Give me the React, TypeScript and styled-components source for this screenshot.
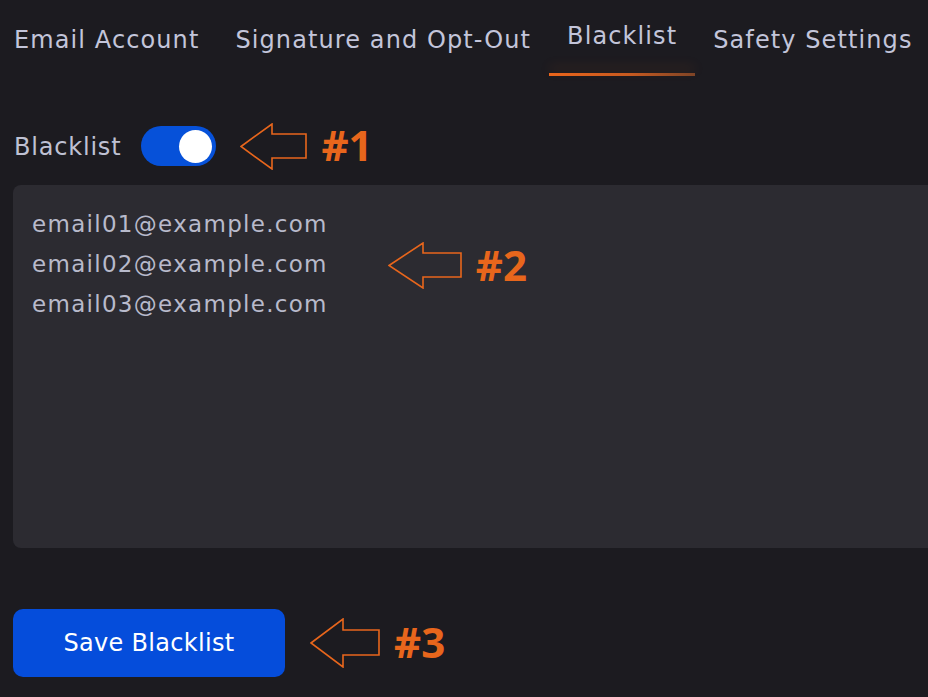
import { useState } from 'react';

import styled, { createGlobalStyle } from 'styled-components';

const tabs = ['Email Account', 'Signature and Opt-Out', 'Blacklist', 'Safety Settings'];

const emails = ['email01@example.com', 'email02@example.com', 'email03@example.com'];

// hand-drawn callout arrows are not all the same size in the screenshot
const Callout = ({ label, w = 66, h = 45 }: { label: string; w?: number; h?: number }) => {
  const head = Math.round(w * 0.48);
  const mid = h / 2;
  const top = Math.round(h * 0.25);
  const bot = h - top;
  return (
    <CalloutWrap>
      <svg width={w + 2} height={h + 2} viewBox={`0 0 ${w + 2} ${h + 2}`}>
        <polygon
          points={`1,${mid + 1} ${head},1 ${head},${top} ${w},${top} ${w},${bot + 1} ${head},${bot + 1} ${head},${h + 1}`}
          fill="none"
          stroke="#e8661c"
          strokeWidth="1.6"
        />
      </svg>
      <span className="label">{label}</span>
    </CalloutWrap>
  );
};

const App = () => {
  const [active, setActive] = useState(2);
  const [enabled, setEnabled] = useState(true);

  return (
    <Page>
      <GlobalStyle />
      <TabBar>
        {tabs.map((t, i) => (
          <Tab key={t} $active={i === active} onClick={() => setActive(i)}>
            {t}
          </Tab>
        ))}
      </TabBar>

      <ToggleRow>
        <span className="title">Blacklist</span>
        <Switch $on={enabled} onClick={() => setEnabled(!enabled)}>
          <span className="knob" />
        </Switch>
        <Callout label="#1" />
      </ToggleRow>

      <ListBox>
        <div className="lines">
          {emails.map((e) => (
            <div key={e}>{e}</div>
          ))}
        </div>
        <Callout label="#2" w={73} />
      </ListBox>

      <Footer>
        <SaveButton>Save Blacklist</SaveButton>
        <Callout label="#3" w={69} h={48} />
      </Footer>
    </Page>
  );
};

export default App;

const GlobalStyle = createGlobalStyle`
  html, body {
    margin: 0;
    padding: 0;
    background: #1c1b20;
  }
  body {
    font-family: 'DejaVu Sans', 'Liberation Sans', sans-serif;
  }
`;

const Page = styled.div`
  width: 928px;
  height: 697px;
  overflow: hidden;
  background: #1c1b20;
  padding-left: 13px;
  box-sizing: border-box;
`;

const TabBar = styled.div`
  display: flex;
  margin-left: -17px;
  height: 77px;
`;

const Tab = styled.div<{ $active: boolean }>`
  position: relative;
  padding: ${(p) => (p.$active ? '22px' : '26px')} 18px 0;
  font-size: 24px;
  line-height: 28px;
  letter-spacing: 1.1px;
  color: #c3c5da;
  white-space: nowrap;
  cursor: pointer;
  &::after {
    content: '';
    display: ${(p) => (p.$active ? 'block' : 'none')};
    position: absolute;
    left: 0;
    right: 0;
    bottom: 1px;
    height: 3px;
    background: linear-gradient(90deg, #ea651b 0%, #c75a20 55%, #7e4426 100%);
    box-shadow: 0 -6px 12px rgba(234, 101, 27, 0.18);
  }
`;

const ToggleRow = styled.div`
  display: flex;
  align-items: center;
  height: 50px;
  margin-top: 44px;
  .title {
    font-size: 24px;
    letter-spacing: 0.8px;
    color: #bfc1d3;
    margin: 1px 20px 0 1px;
  }
`;

const Switch = styled.div<{ $on: boolean }>`
  width: 75px;
  height: 40px;
  border-radius: 20px;
  background: ${(p) => (p.$on ? '#0651d9' : '#4a4a52')};
  display: flex;
  align-items: center;
  justify-content: ${(p) => (p.$on ? 'flex-end' : 'flex-start')};
  padding: 0 4px;
  box-sizing: border-box;
  margin-right: 24px;
  cursor: pointer;
  .knob {
    width: 33px;
    height: 33px;
    border-radius: 50%;
    background: #ffffff;
  }
`;

const CalloutWrap = styled.div`
  display: flex;
  align-items: center;
  gap: 13px;
  svg {
    display: block;
  }
  .label {
    font-family: 'Open Sans', 'Liberation Sans', sans-serif;
    font-weight: 700;
    font-size: 42px;
    line-height: 1;
    color: #e8661c;
    margin-top: -2px;
  }
`;

const ListBox = styled.div`
  margin-top: 14px;
  width: 960px;
  height: 363px;
  background: #2c2b31;
  border-radius: 8px;
  box-sizing: border-box;
  padding: 19px 19px;
  display: flex;
  align-items: flex-start;
  .lines {
    font-size: 23px;
    line-height: 40px;
    letter-spacing: 1.3px;
    color: #b8bacb;
    margin-right: 60px;
  }
  ${CalloutWrap} {
    margin-top: 38px;
  }
`;

const Footer = styled.div`
  display: flex;
  align-items: center;
  margin-top: 61px;
  gap: 25px;
`;

const SaveButton = styled.button`
  width: 272px;
  height: 68px;
  border: none;
  border-radius: 10px;
  background: #054ddb;
  color: #ffffff;
  font-family: 'DejaVu Sans', 'Liberation Sans', sans-serif;
  font-size: 24px;
  letter-spacing: 0.3px;
  cursor: pointer;
`;
